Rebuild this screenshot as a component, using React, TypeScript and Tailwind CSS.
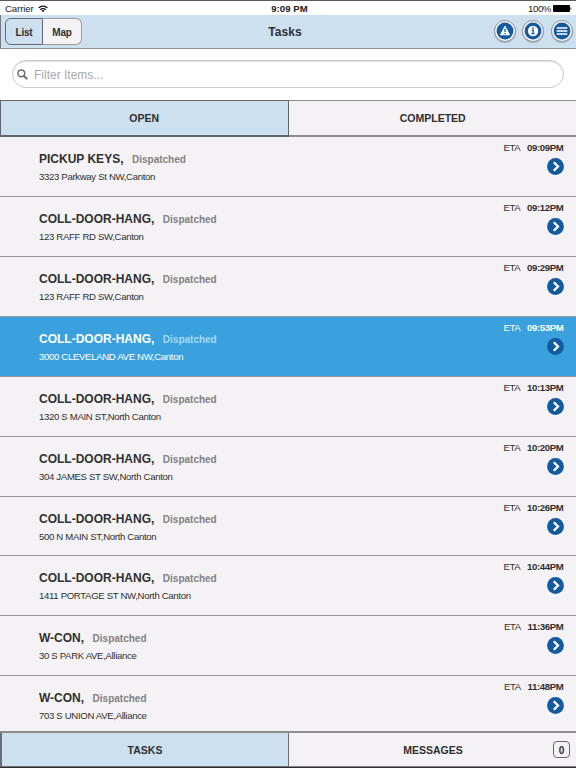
import clsx from "clsx";

type Task = {
    title: string;
    address: string;
    eta: string;
    selected?: boolean;
};

const tasks: Task[] = [
    { title: "PICKUP KEYS,", address: "3323 Parkway St NW,Canton", eta: "09:09PM" },
    { title: "COLL-DOOR-HANG,", address: "123 RAFF RD SW,Canton", eta: "09:12PM" },
    { title: "COLL-DOOR-HANG,", address: "123 RAFF RD SW,Canton", eta: "09:29PM" },
    { title: "COLL-DOOR-HANG,", address: "3000 CLEVELAND AVE NW,Canton", eta: "09:53PM", selected: true },
    { title: "COLL-DOOR-HANG,", address: "1320 S MAIN ST,North Canton", eta: "10:13PM" },
    { title: "COLL-DOOR-HANG,", address: "304 JAMES ST SW,North Canton", eta: "10:20PM" },
    { title: "COLL-DOOR-HANG,", address: "500 N MAIN ST,North Canton", eta: "10:26PM" },
    { title: "COLL-DOOR-HANG,", address: "1411 PORTAGE ST NW,North Canton", eta: "10:44PM" },
    { title: "W-CON,", address: "30 S PARK AVE,Alliance", eta: "11:36PM" },
    { title: "W-CON,", address: "703 S UNION AVE,Alliance", eta: "11:48PM" },
];

const StatusBar = () => (
    <div className="grid h-[15px] shrink-0 grid-cols-3 items-center border-t border-[#5a5a5c] bg-white pt-px pr-[4px] pl-[5px] text-[9.6px] leading-none text-[#222]">
        <div className="flex items-center gap-[4px]">
            <span className="tracking-[-0.1px]">Carrier</span>
            <svg width="10" height="8" viewBox="0 0 10 8" fill="none" stroke="#111" strokeWidth="1.3">
                <path d="M.6 2.9a6.2 6.2 0 0 1 8.8 0" />
                <path d="M2.3 4.7a3.8 3.8 0 0 1 5.4 0" />
                <path d="M3.6 5.8a2 2 0 0 1 2.8 0L5 7.3z" fill="#111" stroke="none" />
            </svg>
        </div>
        <span className="pl-[2px] text-center font-bold tracking-[0.05px]">9:09 PM</span>
        <div className="flex items-center justify-end gap-[2px]">
            <span className="tracking-[-0.4px]">100%</span>
            <svg width="19" height="7" viewBox="0 0 19 7">
                <rect width="17" height="7" rx="1" fill="#000" />
                <path d="M17.5 2.3c1.1.3 1.1 2.1 0 2.4z" fill="#000" />
            </svg>
        </div>
    </div>
);

const HeaderButton = ({ children }: { children: React.ReactNode }) => (
    <button className="flex size-[22px] items-center justify-center rounded-full border border-[#929497] bg-[#f8f6f7] shadow-[0_1px_1px_rgba(0,0,0,0.2)]">
        <svg width="18" height="18" viewBox="0 0 18 18" className="shrink-0">
            <circle cx="9" cy="9" r="8.4" fill="#145a9e" />
            {children}
        </svg>
    </button>
);

const Header = () => (
    <header className="grid h-[34px] shrink-0 grid-cols-3 items-center border-b border-l border-b-[#8f9194] border-l-[#77797c] bg-[#cce0ef] pr-[3px] pl-[4px]">
        <div className="flex h-[27px] w-[77px] rounded-[6px] text-[10px] font-bold tracking-[-0.2px]">
            <button className="w-[38px] rounded-l-[6px] border border-[#626974] bg-[#cce0ef] pt-[2px]">
                List
            </button>
            <button className="grow rounded-r-[6px] border border-l-0 border-[#999b9f] bg-[#f4f2f4] pt-[2px]">
                Map
            </button>
        </div>
        <h1 className="pt-px pr-[8px] text-center text-[12px] font-bold tracking-[0.1px]">Tasks</h1>
        <div className="flex -translate-y-px justify-end gap-[6.5px]">
            <HeaderButton>
                <path d="M9 4.1 13.7 12.9H4.3z" fill="#fff" stroke="#fff" strokeWidth=".7" strokeLinejoin="round" />
                <path d="M9 6.8v3.2M9 11v1.2" stroke="#145a9e" strokeWidth="1.3" />
            </HeaderButton>
            <HeaderButton>
                <circle cx="9" cy="9" r="5.2" fill="#fff" />
                <path d="M8.2 6h1.6M7.7 8.1h1.5v3.5M7.5 11.7h3" fill="none" stroke="#145a9e" strokeWidth="1.3" />
            </HeaderButton>
            <HeaderButton>
                <path d="M3.7 5.9h10.6M3.7 9h10.6M3.7 12.1h10.6" stroke="#fff" strokeWidth="1.5" />
            </HeaderButton>
        </div>
    </header>
);

const SearchBox = () => (
    <div className="h-[51px] shrink-0 bg-white px-[12px] pt-[11px]">
        <div className="flex h-[28px] items-center rounded-full border border-[#c9c9ca] pl-[4px] shadow-[inset_0_1px_1px_rgba(0,0,0,0.12)]">
            <svg width="11" height="11" viewBox="0 0 11 11" fill="none" stroke="#6c6c6d">
                <circle cx="4.3" cy="4.3" r="3.4" strokeWidth="1.5" />
                <path d="m7 7 2.7 2.7" strokeWidth="1.9" strokeLinecap="round" />
            </svg>
            <span className="ml-[6px] pt-[2px] text-[12px] leading-none text-[#a9a9aa]">
                Filter Items...
            </span>
        </div>
    </div>
);

const TaskRow = ({ task }: { task: Task }) => (
    <li
        className={clsx(
            "flex h-[59.93px] shrink-0 justify-between border-b border-[#99979a] pr-[12px] pl-[39px]",
            task.selected ? "bg-[#3aa1de] text-white" : "bg-[#f4f2f4]"
        )}
    >
        <div className="pt-[14px]">
            <div className="flex h-[16px] items-baseline leading-[16px] font-bold">
                <span className="text-[12px]">{task.title}</span>
                <span
                    className={clsx(
                        "ml-[8.5px] text-[10px]",
                        task.selected ? "text-[#a9d8f5]" : "text-[#828183]"
                    )}
                >
                    Dispatched
                </span>
            </div>
            <p className="mt-[4px] text-[9.6px] leading-[12px] tracking-[-0.33px]">{task.address}</p>
        </div>
        <div className="flex flex-col items-end pt-[5px]">
            <div className="flex gap-[6.5px] pr-[0.5px] text-[9.6px] leading-[12px] tracking-[-0.33px]">
                <span>ETA</span>
                <b>{task.eta}</b>
            </div>
            <svg width="17" height="17" viewBox="0 0 17 17" className="mt-[4px]">
                <circle cx="8.5" cy="8.5" r="8.4" fill="#145a9e" />
                <path d="m6.8 4.3 4.2 4.2-4.2 4.2" fill="none" stroke="#fff" strokeWidth="2.3" />
            </svg>
        </div>
    </li>
);

export default function App() {
    return (
        <div className="flex h-[768px] w-[576px] flex-col overflow-hidden bg-[#f4f2f4] font-['Liberation_Sans',Arial,sans-serif] text-[#303032]">
            <StatusBar />
            <Header />
            <SearchBox />
            <div className="grid h-[37px] shrink-0 grid-cols-[288.5px_1fr] text-[10.5px] font-bold">
                <button className="border border-b-2 border-[#62666d] bg-[#cce0ef] pt-[2px]">OPEN</button>
                <button className="border-t border-b-2 border-[#8c8b8e] bg-[#f4f2f4] pt-[2px] pl-px">COMPLETED</button>
            </div>
            <ul className="flex h-[594px] shrink-0 flex-col overflow-hidden">
                {tasks.map((task) => (
                    <TaskRow key={task.eta} task={task} />
                ))}
            </ul>
            <footer className="grid h-[37px] shrink-0 grid-cols-[289px_1fr] border-t-2 border-b border-t-[#8d8c8f] border-b-[#303033] text-[10.5px] font-bold">
                <button className="border-r border-b border-l-2 border-[#6a6d72] bg-[#cce0ef] pt-[2px]">TASKS</button>
                <button className="relative border-b border-[#858487] bg-[#f4f2f4] pt-[2px] pl-px">
                    MESSAGES
                    <span className="absolute top-[8px] right-[6px] flex size-[17px] items-center justify-center rounded-[4px] border border-[#68676a] pt-px text-[10px]">
                        0
                    </span>
                </button>
            </footer>
        </div>
    );
}
